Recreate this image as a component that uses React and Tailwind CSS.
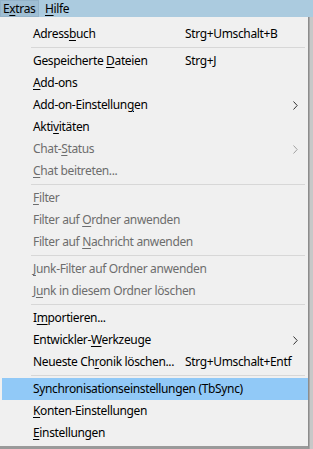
import React from 'react';

const Chevron = ({ disabled }) => (
  <svg width="5" height="9" viewBox="0 0 5 9" className="ml-auto mr-[10px]">
    <path d="M0.5 0.5 L4.2 4.5 L0.5 8.5" fill="none" stroke={disabled ? '#a0a0a0' : '#333'} strokeWidth="1" />
  </svg>
);

function Item({ pre = '', u = '', post = '', shortcut, disabled, sub, active }) {
  return (
    <div
      className={`flex items-center h-[22px] pl-[31px] ${active ? 'bg-[#91c9f7]' : ''} ${
        disabled ? 'text-[#6d6d6d]' : 'text-black'
      }`}
    >
      <span className="shrink-0 min-w-[152px] whitespace-nowrap">
        {pre}
        {u && <span className="underline underline-offset-2">{u}</span>}
        {post}
      </span>
      {shortcut && <span className="whitespace-nowrap">{shortcut}</span>}
      {sub && <Chevron disabled={disabled} />}
    </div>
  );
}

const Sep = () => (
  <div className="h-[5px] flex items-center pl-[29px] pr-[3px]">
    <div className="h-px w-full bg-[#d7d7d7]" />
  </div>
);

export default function App() {
  return (
    <div className="w-[313px] h-[449px] overflow-hidden bg-[#bfbfbf] text-[12px] tracking-[-0.35px] font-['Segoe_UI','Noto_Sans',sans-serif] leading-none">
      <div className="h-[17px] bg-[#abcbdf] flex items-stretch">
        <div className="w-[39px] bg-[#9fbed3] border border-[#94b3c9] flex items-center pl-[2px]">
          E<span className="underline underline-offset-2">x</span>tras
        </div>
        <div className="pl-[6px] flex items-center">
          <span className="underline underline-offset-2">H</span>ilfe
        </div>
      </div>
      <div className="flex">
        <div className="w-[309px] bg-[#f0f0f0] border-r border-b-[3px] border-[#8c8c8c] border-b-[#9a9a9a] pt-[6px] pb-[2px] pl-[2px]">
          <Item pre="Adress" u="b" post="uch" shortcut="Strg+Umschalt+B" />
          <Sep />
          <Item pre="Gespeicherte " u="D" post="ateien" shortcut="Strg+J" />
          <Item u="A" post="dd-ons" />
          <Item pre="Add-on-Einstellun" u="g" post="en" sub />
          <Item pre="Akti" u="v" post="itäten" />
          <Item pre="Chat-" u="S" post="tatus" disabled sub />
          <Item u="C" post="hat beitreten..." disabled />
          <Sep />
          <Item u="F" post="ilter" disabled />
          <Item pre="Filter auf " u="O" post="rdner anwenden" disabled />
          <Item pre="Filter auf " u="N" post="achricht anwenden" disabled />
          <Sep />
          <Item u="J" post="unk-Filter auf Ordner anwenden" disabled />
          <Item pre="J" u="u" post="nk in diesem Ordner löschen" disabled />
          <Sep />
          <Item pre="I" u="m" post="portieren..." />
          <Item pre="Entwickler-" u="W" post="erkzeuge" sub />
          <Item pre="Neueste Ch" u="r" post="onik löschen..." shortcut="Strg+Umschalt+Entf" />
          <Sep />
          <Item pre="Synchronisationseinstellungen (TbSync)" active />
          <Item u="K" post="onten-Einstellungen" />
          <Item u="E" post="instellungen" />
        </div>
        <div className="flex-1 bg-[#c8c8c8] border-l border-[#a8a8a8]" />
      </div>
    </div>
  );
}
